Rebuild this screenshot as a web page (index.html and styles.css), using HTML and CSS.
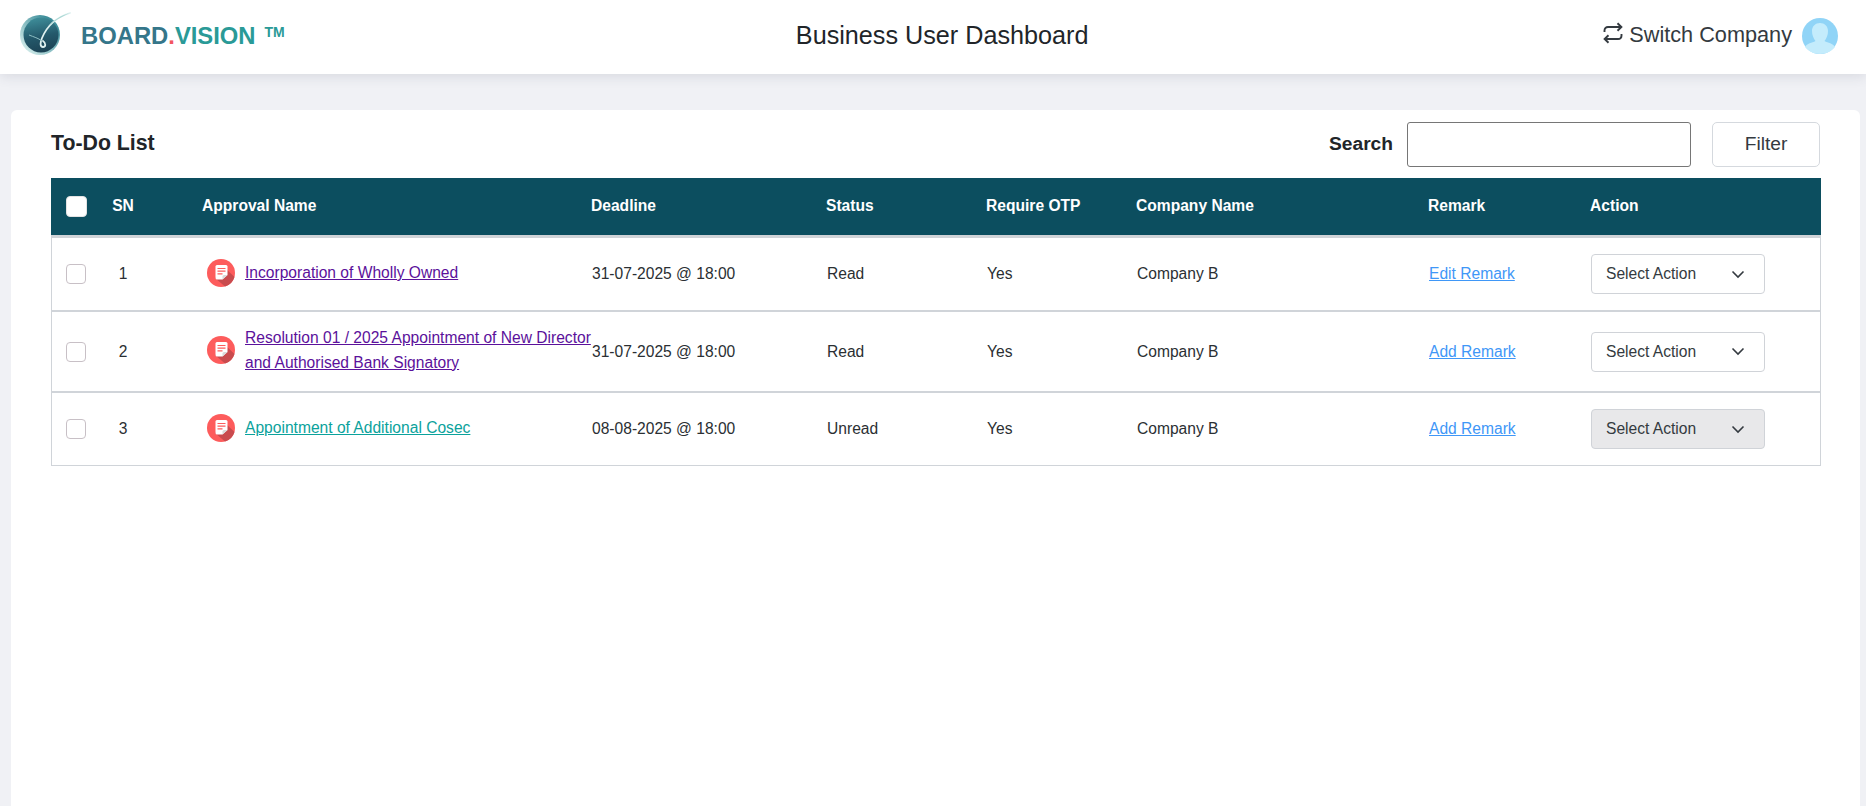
FILE: index.html
```html
<!DOCTYPE html>
<html lang="en">
<head>
<meta charset="utf-8">
<title>Business User Dashboard</title>
<link rel="stylesheet" href="styles.css">
</head>
<body>
<header class="topbar">
  <div class="brand">
    <svg class="brand-mark" width="52" height="44" viewBox="0 0 52 44">
      <defs>
        <linearGradient id="orb" x1="0.3" y1="0" x2="0.5" y2="1">
          <stop offset="0" stop-color="#3f8f9b"/>
          <stop offset="0.55" stop-color="#24596b"/>
          <stop offset="1" stop-color="#1c4355"/>
        </linearGradient>
        <linearGradient id="rim" x1="0.8" y1="0.2" x2="0.1" y2="0.9">
          <stop offset="0" stop-color="#3f8f9b"/>
          <stop offset="1" stop-color="#d6eeec"/>
        </linearGradient>
      </defs>
      <circle cx="21" cy="23" r="20" fill="url(#rim)"/>
      <circle cx="22" cy="23" r="17.5" fill="url(#orb)"/>
      <path d="M51 1C38 5 28 14 23 26C21 31 21 35 24 35C27 35 27 31 24 29" fill="none" stroke="#dff1f0" stroke-width="1.8" stroke-linecap="round"/>
      <path d="M51 1C42 3 33 9 28 16C33 10 42 5 51 1Z" fill="#a9d6d3"/>
      <path d="M10 23C15 25 19 26 23 29" fill="none" stroke="#8fbfc4" stroke-width="1"/>
    </svg>
    <span class="brand-name"><span class="brand-board">BOARD</span><span class="brand-dot">.</span><span class="brand-vision">VISION</span></span>
    <span class="brand-tm">TM</span>
  </div>
  <h1 class="page-title">Business User Dashboard</h1>
  <div class="account">
    <svg class="switch-icon" width="20" height="22" viewBox="0 0 20 22">
      <path d="M1.5 10V8.5C1.5 6.5 3 5 5 5H18M14.5 1.2L18.4 5L14.5 8.8M18.5 12V13.5C18.5 15.5 17 17 15 17H2M5.5 13.2L1.6 17L5.5 20.8" fill="none" stroke="#343a40" stroke-width="1.9"/>
    </svg>
    <span class="switch-label">Switch Company</span>
    <svg class="avatar" width="36" height="36" viewBox="0 0 36 36">
      <circle cx="18" cy="18" r="18" fill="#90d4f7"/>
      <path d="M18 36C11 36 5.500 32.500 3 29C5 25.500 10 24.800 13.500 23C11.500 20.500 10 17 10 13C10 8 13.500 5 18 5C22.500 5 26 8 26 13C26 17 24.500 20.500 22.500 23C26 24.800 31 25.500 33 29C30.500 32.500 25 36 18 36Z" fill="#c4ecfc"/>
    </svg>
  </div>
</header>

<main class="page">
  <section class="card">
    <div class="toolbar">
      <h2 class="card-title">To-Do List</h2>
      <div class="tools">
        <label class="search-label" for="search">Search</label>
        <input class="search-input" id="search" type="text">
        <button class="filter-btn" type="button">Filter</button>
      </div>
    </div>

    <table class="todo">
      <colgroup>
        <col class="c-check"><col class="c-sn"><col class="c-name"><col class="c-deadline"><col class="c-status"><col class="c-otp"><col class="c-company"><col class="c-remark"><col class="c-action">
      </colgroup>
      <thead>
        <tr>
          <th><input class="check check-head" type="checkbox" aria-label="Select all"></th>
          <th class="sn">SN</th>
          <th>Approval Name</th>
          <th>Deadline</th>
          <th>Status</th>
          <th>Require OTP</th>
          <th>Company Name</th>
          <th>Remark</th>
          <th>Action</th>
        </tr>
      </thead>
      <tbody>
        <tr>
          <td><input class="check" type="checkbox" aria-label="Select row 1"></td>
          <td class="sn">1</td>
          <td><div class="approval">
            <svg class="doc-icon" width="28" height="28" viewBox="0 0 28 28"><use href="#doc"/></svg>
            <a class="link-visited" href="#">Incorporation of Wholly Owned</a>
          </div></td>
          <td>31-07-2025 @ 18:00</td>
          <td>Read</td>
          <td>Yes</td>
          <td>Company B</td>
          <td><a class="link-remark" href="#">Edit Remark</a></td>
          <td><div class="select"><span>Select Action</span><svg width="14" height="9" viewBox="0 0 14 9"><path d="M1.500 1.500L7 7L12.500 1.500" fill="none" stroke="#343a40" stroke-width="1.600"/></svg></div></td>
        </tr>
        <tr class="row-tall">
          <td><input class="check" type="checkbox" aria-label="Select row 2"></td>
          <td class="sn">2</td>
          <td><div class="approval">
            <svg class="doc-icon" width="28" height="28" viewBox="0 0 28 28"><use href="#doc"/></svg>
            <a class="link-visited" href="#">Resolution 01 / 2025 Appointment of New Director<br>and Authorised Bank Signatory</a>
          </div></td>
          <td>31-07-2025 @ 18:00</td>
          <td>Read</td>
          <td>Yes</td>
          <td>Company B</td>
          <td><a class="link-remark" href="#">Add Remark</a></td>
          <td><div class="select"><span>Select Action</span><svg width="14" height="9" viewBox="0 0 14 9"><path d="M1.500 1.500L7 7L12.500 1.500" fill="none" stroke="#343a40" stroke-width="1.600"/></svg></div></td>
        </tr>
        <tr>
          <td><input class="check" type="checkbox" aria-label="Select row 3"></td>
          <td class="sn">3</td>
          <td><div class="approval">
            <svg class="doc-icon" width="28" height="28" viewBox="0 0 28 28"><use href="#doc"/></svg>
            <a class="link-new" href="#">Appointment of Additional Cosec</a>
          </div></td>
          <td>08-08-2025 @ 18:00</td>
          <td>Unread</td>
          <td>Yes</td>
          <td>Company B</td>
          <td><a class="link-remark" href="#">Add Remark</a></td>
          <td><div class="select select-disabled"><span>Select Action</span><svg width="14" height="9" viewBox="0 0 14 9"><path d="M1.500 1.500L7 7L12.500 1.500" fill="none" stroke="#343a40" stroke-width="1.600"/></svg></div></td>
        </tr>
      </tbody>
    </table>
  </section>
</main>

<svg class="sprite" width="0" height="0" aria-hidden="true">
  <symbol id="doc" viewBox="0 0 28 28">
    <circle cx="14" cy="14" r="14" fill="#fd5c5c"/>
    <path d="M8 19L17 8L27.500 18A14 14 0 0 1 18 27.500Z" fill="#c94b4e"/>
    <path d="M8.500 7.500A1.500 1.500 0 0 1 10 6H19A1.500 1.500 0 0 1 20.500 7.500V16L15.500 20.500H10A1.500 1.500 0 0 1 8.500 19Z" fill="#fff"/>
    <path d="M20.500 16H17A1.500 1.500 0 0 0 15.500 17.500V20.500Z" fill="#d9d9d9"/>
    <path d="M10.500 9.500H18.500M10.500 12.200H18.500M10.500 14.900H15.500" stroke="#fd5c5c" stroke-width="1.200"/>
  </symbol>
</svg>
</body>
</html>
```
FILE: styles.css
```css
* { box-sizing: border-box; }

html, body {
  margin: 0;
  height: 100%;
  overflow: hidden;
}

body {
  background: #f0f1f5;
  color: #212529;
  font-family: "Liberation Sans", Arial, sans-serif;
}

.topbar {
  position: relative;
  z-index: 1;
  height: 74px;
  padding: 0 28px 0 19px;
  display: flex;
  align-items: center;
  justify-content: space-between;
  background: #fff;
  box-shadow: 0 2px 12px rgba(60, 65, 90, 0.14);
}

.brand {
  display: flex;
  align-items: center;
  width: 262px;
  white-space: nowrap;
}

.brand-mark { flex: none; margin-top: -6px; }

.brand-name {
  margin: 0 0 3px 10px;
  font-size: 23.8px;
  font-weight: 700;
}

.brand-board { color: #35768a; }
.brand-dot { color: #f2555f; }
.brand-vision { color: #2a9a97; }

.brand-tm {
  margin: 0 0 10px 9px;
  font-size: 14px;
  font-weight: 700;
  color: #2a9a97;
}

.page-title {
  margin: 0 0 3px;
  font-size: 25.2px;
  font-weight: 400;
  color: #212529;
}

.account {
  display: flex;
  align-items: center;
}

.switch-icon { margin-bottom: 9px; }

.switch-label {
  margin: 0 0 5px 6px;
  font-size: 21.7px;
  color: #343a40;
}

.avatar { margin: 0 0 2px 10px; }

.page {
  padding: 36px 6px 0 11px;
}

.card {
  min-height: calc(100vh - 110px);
  padding: 12px 40px 0;
  background: #fff;
  border-radius: 6px 6px 0 0;
}

.toolbar {
  height: 45px;
  display: flex;
  align-items: center;
  justify-content: space-between;
}

.card-title {
  margin: -2px 0 0;
  font-size: 21.3px;
  font-weight: 700;
}

.tools {
  display: flex;
  align-items: stretch;
  height: 45px;
}

.search-label {
  align-self: center;
  margin: 0 14px 2px 0;
  font-size: 19.2px;
  font-weight: 700;
}

.search-input {
  width: 284px;
  border: 1px solid #767676;
  border-radius: 3px;
  background: #fff;
}

.filter-btn {
  width: 108px;
  margin-left: 21px;
  padding: 0 0 2px;
  border: 1px solid #d5d9de;
  border-radius: 5px;
  background: #fff;
  color: #343a40;
  font: 19.2px "Liberation Sans", Arial, sans-serif;
}

.todo {
  width: 1770px;
  margin-top: 11px;
  border-collapse: separate;
  border-spacing: 0;
  table-layout: fixed;
  font-size: 15.6px;
}

.c-check { width: 52px; }
.c-sn { width: 99px; }
.c-name { width: 389px; }
.c-deadline { width: 235px; }
.c-status { width: 160px; }
.c-otp { width: 150px; }
.c-company { width: 292px; }
.c-remark { width: 162px; }
.c-action { width: 231px; }

.todo th {
  height: 55px;
  padding: 0 0 2px;
  background: #0c4e5f;
  color: #fff;
  font-size: 15.6px;
  font-weight: 700;
  text-align: left;
  border-bottom: 3px solid #d0d3d7;
  box-sizing: content-box;
}

.todo th:first-child,
.todo td:first-child { padding-left: 15px; }

.todo td {
  height: 74px;
  padding: 0 0 0 1px;
  color: #2b2f33;
  border-bottom: 2px solid #d0d4d9;
  vertical-align: middle;
}

.todo td:first-child { border-left: 1px solid #d0d4d9; padding-left: 14px; }
.todo td:last-child { border-right: 1px solid #d0d4d9; }
.todo tbody tr:last-child td { height: 73px; border-bottom-width: 1px; }
.todo .row-tall td { height: 81px; }

.todo .sn {
  padding: 0 59px 0 0;
  text-align: center;
}

.todo th.sn { padding-bottom: 2px; }

.check {
  display: block;
  width: 20px;
  height: 20px;
  margin: 0;
  appearance: none;
  border: 1px solid #c8c0c6;
  border-radius: 4px;
  background: #fff;
}

.check-head { width: 21px; height: 21px; margin-top: 2px; border-color: #e3e3e3; }

.approval {
  display: flex;
  align-items: center;
  margin: 0 0 3px 4px;
}

.doc-icon { flex: none; margin-right: 10px; }

.approval a { line-height: 25px; white-space: nowrap; }

.link-visited { color: #5b119b; }
.link-new { color: #0ba29c; }
.link-remark { color: #3f97f7; }

.select {
  width: 174px;
  height: 40px;
  padding: 0 19px 0 14px;
  display: flex;
  align-items: center;
  justify-content: space-between;
  border: 1px solid #d0d3d8;
  border-radius: 4px;
  background: #fff;
  color: #343a40;
}

.select-disabled { background: #e8e8ea; }

.sprite { position: absolute; }
```
